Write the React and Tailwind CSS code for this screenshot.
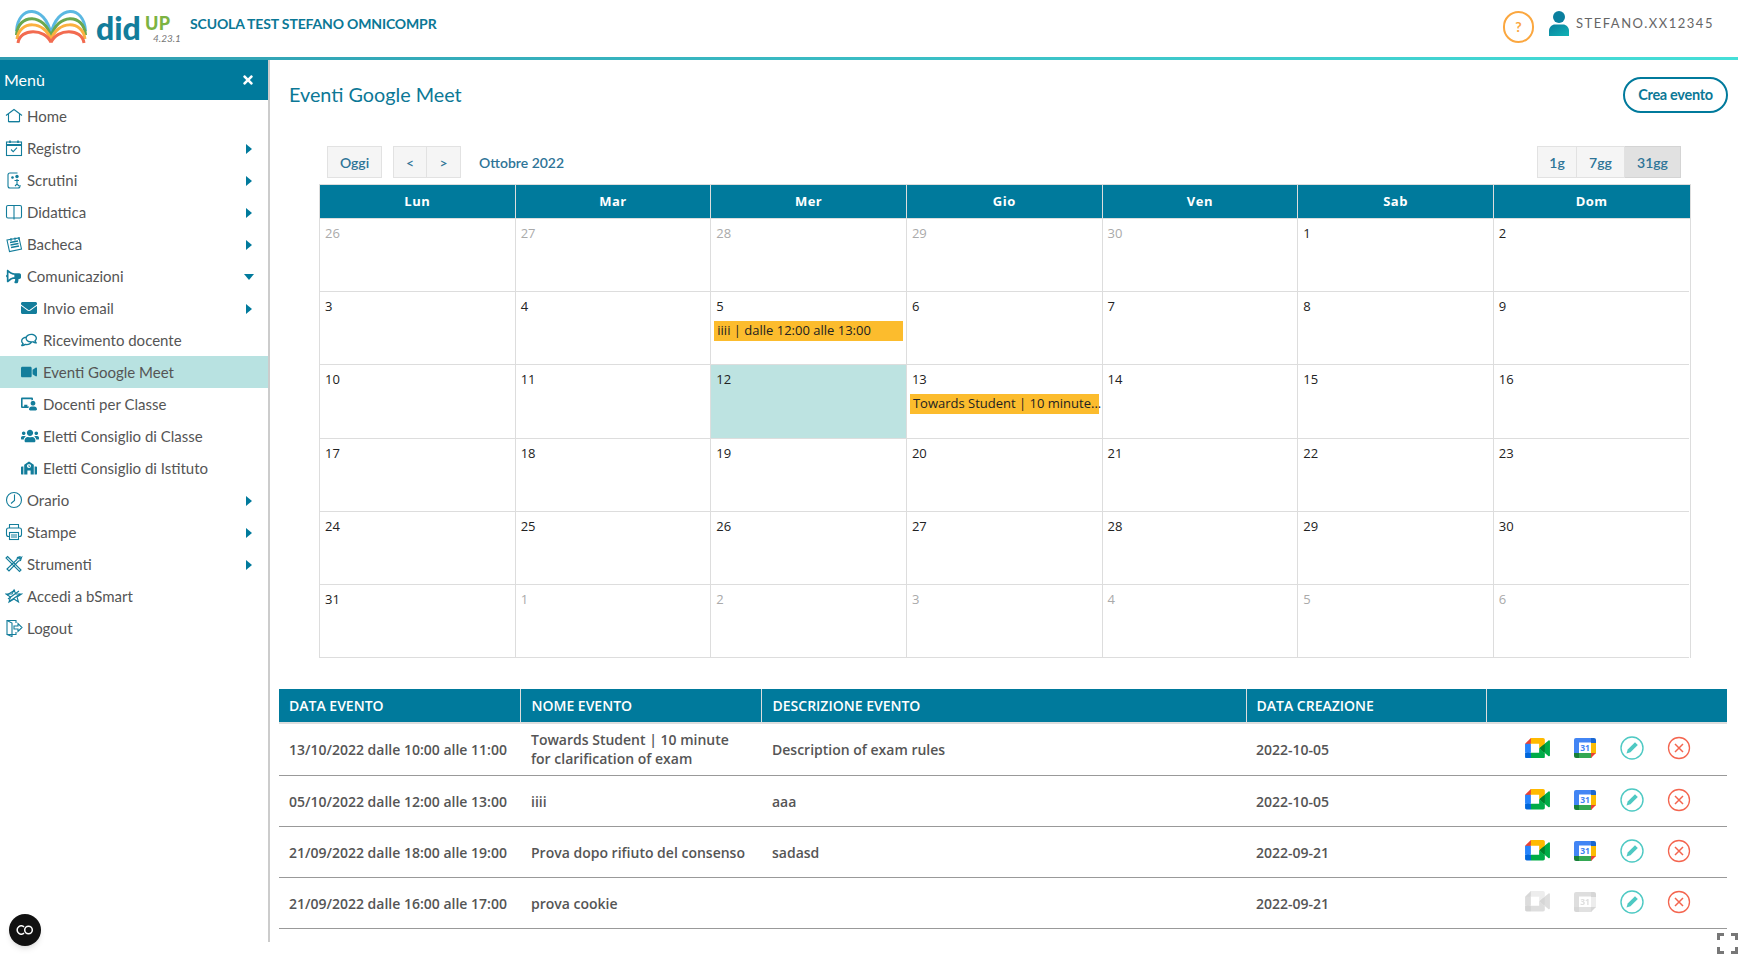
import React from "react";
import { FaTimes, FaEnvelope, FaVideo, FaUsers, FaSchool, FaBullhorn, FaRegComments, FaChalkboardTeacher } from "react-icons/fa";

const S = ({ children, size = 18, className = "" }) => (
  <svg width={size} height={size} viewBox="0 0 18 18" fill="none" stroke="currentColor" strokeWidth="1.1" className={className}>{children}</svg>
);
const IHome = () => <S><path d="M1 8.5 9 2.5l8 6" /><path d="M3.5 7v7.5h11V7" /><path d="M3.5 15h11" strokeWidth="1.6" opacity=".5" /></S>;
const IReg = () => <S><rect x="1.5" y="3" width="15" height="13.5" /><path d="M1.5 6h15" strokeWidth="2" /><path d="M5 1.5V4M13 1.5V4" strokeWidth="1.6" /><path d="m6 10.5 2.2 2.2L12 8.7" /></S>;
const IScr = () => <S><path d="M12.5 2H5a2 2 0 0 0-2 2v11a2 2 0 0 0 2 2h8a2 2 0 0 0 2-2v-1" /><circle cx="12" cy="5.5" r="1.7" fill="currentColor" stroke="none" /><path d="M12 8v5M10 15l2-2 2 2M9.5 9.5H14" /><circle cx="7.5" cy="6.5" r=".8" fill="currentColor" /></S>;
const IDid = () => <S><rect x="1.5" y="2.5" width="15" height="12.5" rx="1.5" /><path d="M9 2.5v14" /></S>;
const IBac = () => <S><path d="m2 5 12-2 2.5 11-12 2.5z" /><path d="M5 7.5l8-1.5M5.5 10l8-1.5M6 12.5l8-1.5" strokeWidth="1.3" /><path d="M6 3v3M10 2.5v3M14 2v3" /></S>;
const IOra = () => <S><circle cx="9" cy="9" r="7.5" /><path d="M9.5 3.5V9.5L6 12.5" /></S>;
const ISta = () => <S><path d="M4.5 5V1.5h9V5" /><rect x="1.5" y="5" width="15" height="8.5" rx="2" /><rect x="4.5" y="9.5" width="9" height="7" fill="#fff" /><path d="M6 12h6M6 14h6" /></S>;
const IStr = () => <S><path d="M2.5 1.5 16 15l-1.5 1.5L1 3z" /><path d="m15.5 1.5-3 1-.5 2L2 14l2 2 9.5-10 2-.5 1-3-2 1.5-1-1z" strokeWidth="1.2" /></S>;
const ISma = () => <S><path d="m9 3 1.800 4h5.700l-4.500 3 1.500 5L9 12l-5 3 1.500-5L1 7h6z" /><path d="M3 12 14 4M5 14 15 7M2 8l8-5" /></S>;
const ILog = () => <S><path d="M11 4V1.500H2v14h9V13" /><path d="M2 1.500 7 4v13.500L2 15.500" /><path d="M9 7h4V4.500L17 8.500l-4 4V10H9z" /></S>;

const menu = [
  ["Home", IHome, 0, ""],
  ["Registro", IReg, 0, "r"],
  ["Scrutini", IScr, 0, "r"],
  ["Didattica", IDid, 0, "r"],
  ["Bacheca", IBac, 0, "r"],
  ["Comunicazioni", () => <FaBullhorn className="text-[15px] -scale-x-100 ml-[1px]" />, 0, "d"],
  ["Invio email", () => <FaEnvelope className="text-[16px]" />, 1, "r"],
  ["Ricevimento docente", () => <FaRegComments className="text-[16px] -scale-x-100" />, 1, ""],
  ["Eventi Google Meet", () => <FaVideo className="text-[16px]" />, 1, "", true],
  ["Docenti per Classe", () => <FaChalkboardTeacher className="text-[16px] -scale-x-100" />, 1, ""],
  ["Eletti Consiglio di Classe", () => <FaUsers className="text-[18px]" />, 1, ""],
  ["Eletti Consiglio di Istituto", () => <FaSchool className="text-[16px]" />, 1, ""],
  ["Orario", IOra, 0, "r"],
  ["Stampe", ISta, 0, "r"],
  ["Strumenti", IStr, 0, "r"],
  ["Accedi a bSmart", ISma, 0, ""],
  ["Logout", ILog, 0, ""],
];

const arcs = [
  ["#5bb8e2", "M1.5 21C3 -5.500 30 -5.500 36 24"],
  ["#6aa84f", "M1.5 25C3 3 30 3 36 27"],
  ["#fbb040", "M2 29C4 10 30 10 36 30"],
  ["#f26b50", "M3 33C5 18 30 18 36 32.500"],
];
const Logo = () => (
  <svg width="72" height="34" viewBox="0 0 72 34" fill="none" strokeWidth="3" className="shrink-0 overflow-visible">
    {arcs.map(([c, d]) => (
      <g key={c} stroke={c}>
        <path d={d} />
        <path d={d} transform="matrix(-1 0 0 1 72 0)" />
      </g>
    ))}
  </svg>
);

const Header = () => (
  <header className="h-[57px] flex items-center relative font-['Lato',sans-serif]">
    <div className="ml-[15px] self-start mt-[10px]"><Logo /></div>
    <div className="ml-[8px] relative w-[95px] h-[57px] shrink-0">
      <span className="absolute left-[1px] top-[8px] text-[32px] leading-[40px] font-black text-[#137d9b]">did</span>
      <span className="absolute left-[50px] top-[12px] text-[18px] leading-[22px] font-black text-[#7cb342] tracking-[0.3px]">UP</span>
      <span className="absolute left-[58px] top-[32px] text-[10px] leading-[13px] italic text-[#777]">4.23.1</span>
    </div>
    <span className="text-[14px] font-bold text-[#0b7896] tracking-[-0.15px] mt-[-10px]">SCUOLA TEST STEFANO OMNICOMPR</span>
    <div className="ml-auto flex items-center mr-[24px] mt-[-4px]">
      <div className="w-[31px] h-[32px] rounded-full border-2 border-[#fba73f] flex items-center justify-center text-[#fba73f] text-[14px] font-bold">?</div>
      <svg width="20" height="25" viewBox="0 0 20 25" className="ml-[15px] mt-[-6px]">
        <defs><linearGradient id="ug" x1="0" y1="0" x2="1" y2="1"><stop offset="0" stopColor="#0a7f9e" /><stop offset="1" stopColor="#10b3b5" /></linearGradient></defs>
        <circle cx="10" cy="6" r="6" fill="#0a7f9e" /><path d="M0 25v-5c0-4 3-6.500 6-6.500h8c3 0 6 2.500 6 6.500v5z" fill="url(#ug)" />
      </svg>
      <span className="ml-[7px] text-[13px] text-[#666] tracking-[1.52px] mt-[-6px]">STEFANO.XX12345</span>
    </div>
  </header>
);

const Arrow = ({ t }) =>
  t === "r" ? (
    <svg width="6" height="10" viewBox="0 0 6 10" className="ml-auto mr-[16px] mt-[1px]"><path d="M0 0 6 5 0 10z" fill="#007a9c" /></svg>
  ) : t === "d" ? (
    <svg width="10" height="6" viewBox="0 0 10 6" className="ml-auto mr-[14px] mt-[1px]"><path d="M0 0h10L5 6z" fill="#007a9c" /></svg>
  ) : null;

const Sidebar = () => (
  <aside className="w-[270px] h-[882px] border-r-2 border-[#ccc] shrink-0 font-['Lato',sans-serif] text-[15px] text-[#555]">
    <div className="h-[40px] bg-[#007a9c] flex items-center pl-[4px] pr-[13px] text-white text-[16px]">
      <span>Menù</span>
      <FaTimes className="ml-auto text-[14px]" />
    </div>
    {menu.map(([label, I, sub, arrow, active]) => (
      <div key={label} className={`h-[32px] flex items-center ${sub ? "pl-[21px]" : "pl-[5px]"} ${active ? "bg-[#b8e2e1]" : ""}`}>
        <span className="w-[22px] shrink-0 flex items-center text-[#137d9b]"><I /></span>
        <span>{label}</span>
        <Arrow t={arrow} />
      </div>
    ))}
  </aside>
);

const Btn = ({ children, className = "" }) => (
  <button className={`h-[32px] border text-[#2e7497] text-[14px] font-semibold flex items-center justify-center ${className}`}>{children}</button>
);

const headDays = ["Lun", "Mar", "Mer", "Gio", "Ven", "Sab", "Dom"];
const cells = [26, 27, 28, 29, 30].map((d) => [d, true]);
for (let i = 1; i <= 31; i++) cells.push([i, false]);
for (let i = 1; i <= 6; i++) cells.push([i, true]);

const Calendar = () => (
  <section className="ml-[49px] w-[1371.5px]">
    <div className="flex items-center h-[32px] ml-[8px] mr-[9.5px] font-['Lato',sans-serif]">
      <Btn className="w-[55px] bg-[#f5f5f5] border-[#e2e2e2]">Oggi</Btn>
      <Btn className="w-[34px] ml-[11px] bg-[#f5f5f5] border-[#e2e2e2]">&lt;</Btn>
      <Btn className="w-[34px] border-l-0 bg-[#f5f5f5] border-[#e2e2e2]">&gt;</Btn>
      <span className="ml-[18px] text-[14px] font-semibold text-[#2e7497]">Ottobre 2022</span>
      <div className="ml-auto flex">
        <Btn className="w-[40px] bg-[#f5f5f5] border-[#e2e2e2]">1g</Btn>
        <Btn className="w-[48px] border-l-0 bg-[#f5f5f5] border-[#e2e2e2]">7gg</Btn>
        <Btn className="w-[56px] border-l-0 bg-[#e1e1e1] border-[#d4d4d4]">31gg</Btn>
      </div>
    </div>
    <div className="mt-[6px] font-['Open_Sans',sans-serif] border border-[#ddd] border-b-0">
      <div className="grid grid-cols-7 bg-[#007a9c] h-[33px]">
        {headDays.map((d, i) => (
          <div key={d} className={`flex items-center justify-center text-white text-[13px] font-bold tracking-[0.5px] ${i < 6 ? "border-r border-[#ddd]" : ""}`}>{d}</div>
        ))}
      </div>
      <div className="grid grid-cols-7 border-t border-[#ddd]">
        {cells.map(([d, other], i) => {
          const today = d === 12 && !other;
          return (
            <div key={i} className={`h-[73.2px] border-b border-[#ddd] pt-[5px] ${i % 7 < 6 ? "border-r" : ""} border-r-[#ddd] ${today ? "bg-[#bde3e1]" : ""}`}>
              <div className={`pl-[5px] text-[13px] leading-[18px] ${other ? "text-[#aaa]" : "text-[#222]"}`}>{d}</div>
              {d === 5 && !other && <div className="mx-[3px] mt-[6px] h-[20px] px-[3px] bg-[#fcbc2d] text-[13px] leading-[19px] text-[#222] whitespace-nowrap">iiii | dalle 12:00 alle 13:00</div>}
              {d === 13 && <div className="mx-[3px] mt-[6px] h-[20px] pl-[3px] bg-[#fcbc2d] text-[13px] leading-[19px] text-[#222] whitespace-nowrap">Towards Student | 10 minute...</div>}
            </div>
          );
        })}
      </div>
    </div>
  </section>
);

const Meet = ({ off }) => (
  <svg width="25" height="20.500" viewBox="0 0 87.500 72" className={off ? "grayscale opacity-25" : ""}>
    <path fill="#00832d" d="M49.500 36l8.530 9.750 11.470 7.330 2-17.020-2-16.640-11.690 6.440z" />
    <path fill="#0066da" d="M0 51.500V66c0 3.315 2.685 6 6 6h14.500l3-10.960-3-9.540-9.950-3z" />
    <path fill="#e94235" d="M20.500 0L0 20.500l10.550 3 9.950-3 2.950-9.410z" />
    <path fill="#2684fc" d="M20.500 20.500H0v31h20.500z" />
    <path fill="#00ac47" d="M82.600 8.680L69.500 19.420v33.660l13.160 10.790c1.970 1.540 4.850.135 4.850-2.370V11c0-2.535-2.945-3.925-4.910-2.320zM49.500 36v15.500h-29V72h43c3.315 0 6-2.685 6-6V53.080z" />
    <path fill="#ffba00" d="M63.500 0h-43v20.500h29V36l20-16.570V6c0-3.315-2.685-6-6-6z" />
  </svg>
);

const GCal = ({ off }) => (
  <svg width="22" height="20" viewBox="0 0 22 20" className={off ? "grayscale opacity-25" : ""}>
    <path d="M2 0h15v15H0V2a2 2 0 0 1 2-2z" fill="#4285f4" />
    <rect x="17" y="4.500" width="5" height="11" fill="#fbbc04" />
    <path d="M17 0h3a2 2 0 0 1 2 2v3h-5z" fill="#1967d2" />
    <rect x="4.500" y="15" width="13" height="5" fill="#34a853" />
    <path d="M0 15h5v5H2a2 2 0 0 1-2-2z" fill="#188038" />
    <path d="M17 20v-5h5z" fill="#ea4335" />
    <rect x="5" y="4.500" width="12" height="10.500" fill="#fff" />
    <text x="11" y="13" textAnchor="middle" fontSize="8.500" fontWeight="700" fontFamily="Open Sans" fill="#4285f4">31</text>
  </svg>
);

const Edit = () => (
  <svg width="24" height="24" viewBox="0 0 24 24" fill="none">
    <circle cx="12" cy="12" r="11" stroke="#4ec9c3" strokeWidth="1.400" />
    <path d="m6.500 17.500 1.200-4 7.300-7.300 2.800 2.800-7.300 7.300z" fill="#4ec9c3" />
  </svg>
);
const Del = () => (
  <svg width="24" height="24" viewBox="0 0 24 24" fill="none">
    <circle cx="12" cy="12" r="10.500" stroke="#f4654f" strokeWidth="1.300" />
    <path d="m8 8 8 8M16 8l-8 8" stroke="#f4654f" strokeWidth="1.500" />
  </svg>
);

const rows = [
  ["13/10/2022 dalle 10:00 alle 11:00", "Towards Student | 10 minute for clarification of exam", "Description of exam rules", "2022-10-05", false, "h-[53px]"],
  ["05/10/2022 dalle 12:00 alle 13:00", "iiii", "aaa", "2022-10-05", false, "h-[51px]"],
  ["21/09/2022 dalle 18:00 alle 19:00", "Prova dopo rifiuto del consenso", "sadasd", "2022-09-21", false, "h-[51px]"],
  ["21/09/2022 dalle 16:00 alle 17:00", "prova cookie", "", "2022-09-21", true, "h-[51px]"],
];

const EventsTable = () => (
  <table className="ml-[9px] mt-[30.5px] w-[1448px] table-fixed border-collapse font-['Open_Sans',sans-serif] text-[14px]">
    <colgroup>
      <col className="w-[241px]" />
      <col className="w-[241px]" />
      <col className="w-[485px]" />
      <col className="w-[240px]" />
      <col className="w-[241px]" />
    </colgroup>
    <thead>
      <tr className="h-[34px] bg-[#007a9c] text-white border-b-2 border-[#ddd]">
        {["DATA EVENTO", "NOME EVENTO", "DESCRIZIONE EVENTO", "DATA CREAZIONE", ""].map((h, i) => (
          <th key={i} className={`pr-[10px] ${i === 1 || i === 2 ? "pl-[11px]" : "pl-[10px]"} text-left text-[14px] font-semibold ${i < 4 ? "border-r border-[#ddd]" : ""}`}>{h}</th>
        ))}
      </tr>
    </thead>
    <tbody className="text-[#555] font-semibold leading-[19px]">
      {rows.map((r) => (
        <tr key={r[0]} className={`${r[5]} border-b border-[#999]`}>
          <td className="px-[10px]">{r[0]}</td>
          <td className="pl-[11px] pr-[9px]">{r[1]}</td>
          <td className="pl-[11px] pr-[9px]">{r[2]}</td>
          <td className="px-[10px]">{r[3]}</td>
          <td>
            <div className="flex items-center pl-[39px] mt-[-3px]">
              <span className="w-[49px]"><Meet off={r[4]} /></span>
              <span className="w-[46px]"><GCal off={r[4]} /></span>
              <span className="w-[47px]"><Edit /></span>
              <span><Del /></span>
            </div>
          </td>
        </tr>
      ))}
    </tbody>
  </table>
);

export default function App() {
  return (
    <div className="w-[1738px] h-[954px] relative overflow-hidden bg-white">
      <Header />
      <div className="h-[3px] bg-gradient-to-r from-[#2f9bb0] to-[#45dfd8]" />
      <div className="flex">
        <Sidebar />
        <main className="flex-1 min-w-0">
          <div className="flex items-center pt-[17px] pl-[19px] pr-[10px]">
            <h1 className="font-['Lato',sans-serif] text-[19.8px] text-[#0b7896]">Eventi Google Meet</h1>
            <button className="ml-auto w-[105px] h-[36px] rounded-full border-2 border-[#007a9c] font-['Lato',sans-serif] text-[14.500px] font-bold text-[#0b7896] tracking-[-0.3px]">Crea evento</button>
          </div>
          <div className="mt-[33px]"><Calendar /></div>
          <EventsTable />
        </main>
      </div>
      <div className="absolute left-[9px] top-[914px] w-[32px] h-[32px] rounded-full bg-[#111] shadow-md flex items-center justify-center">
        <svg width="18" height="10" viewBox="0 0 18 10" fill="none" stroke="#fff" strokeWidth="1.500"><path d="M8 2A3.600 3.600 0 0 0 2.500 2a4 4 0 0 0 0 6A3.600 3.600 0 0 0 8 8" /><circle cx="12.500" cy="5" r="3.800" /></svg>
      </div>
      <svg width="21" height="21" viewBox="0 0 21 21" fill="none" stroke="#777" strokeWidth="3" className="absolute left-[1717px] top-[933px]">
        <path d="M1.500 7V1.500H7M14 1.500h5.500V7M1.500 14v5.500H7M14 19.500h5.500V14" />
      </svg>
    </div>
  );
}
